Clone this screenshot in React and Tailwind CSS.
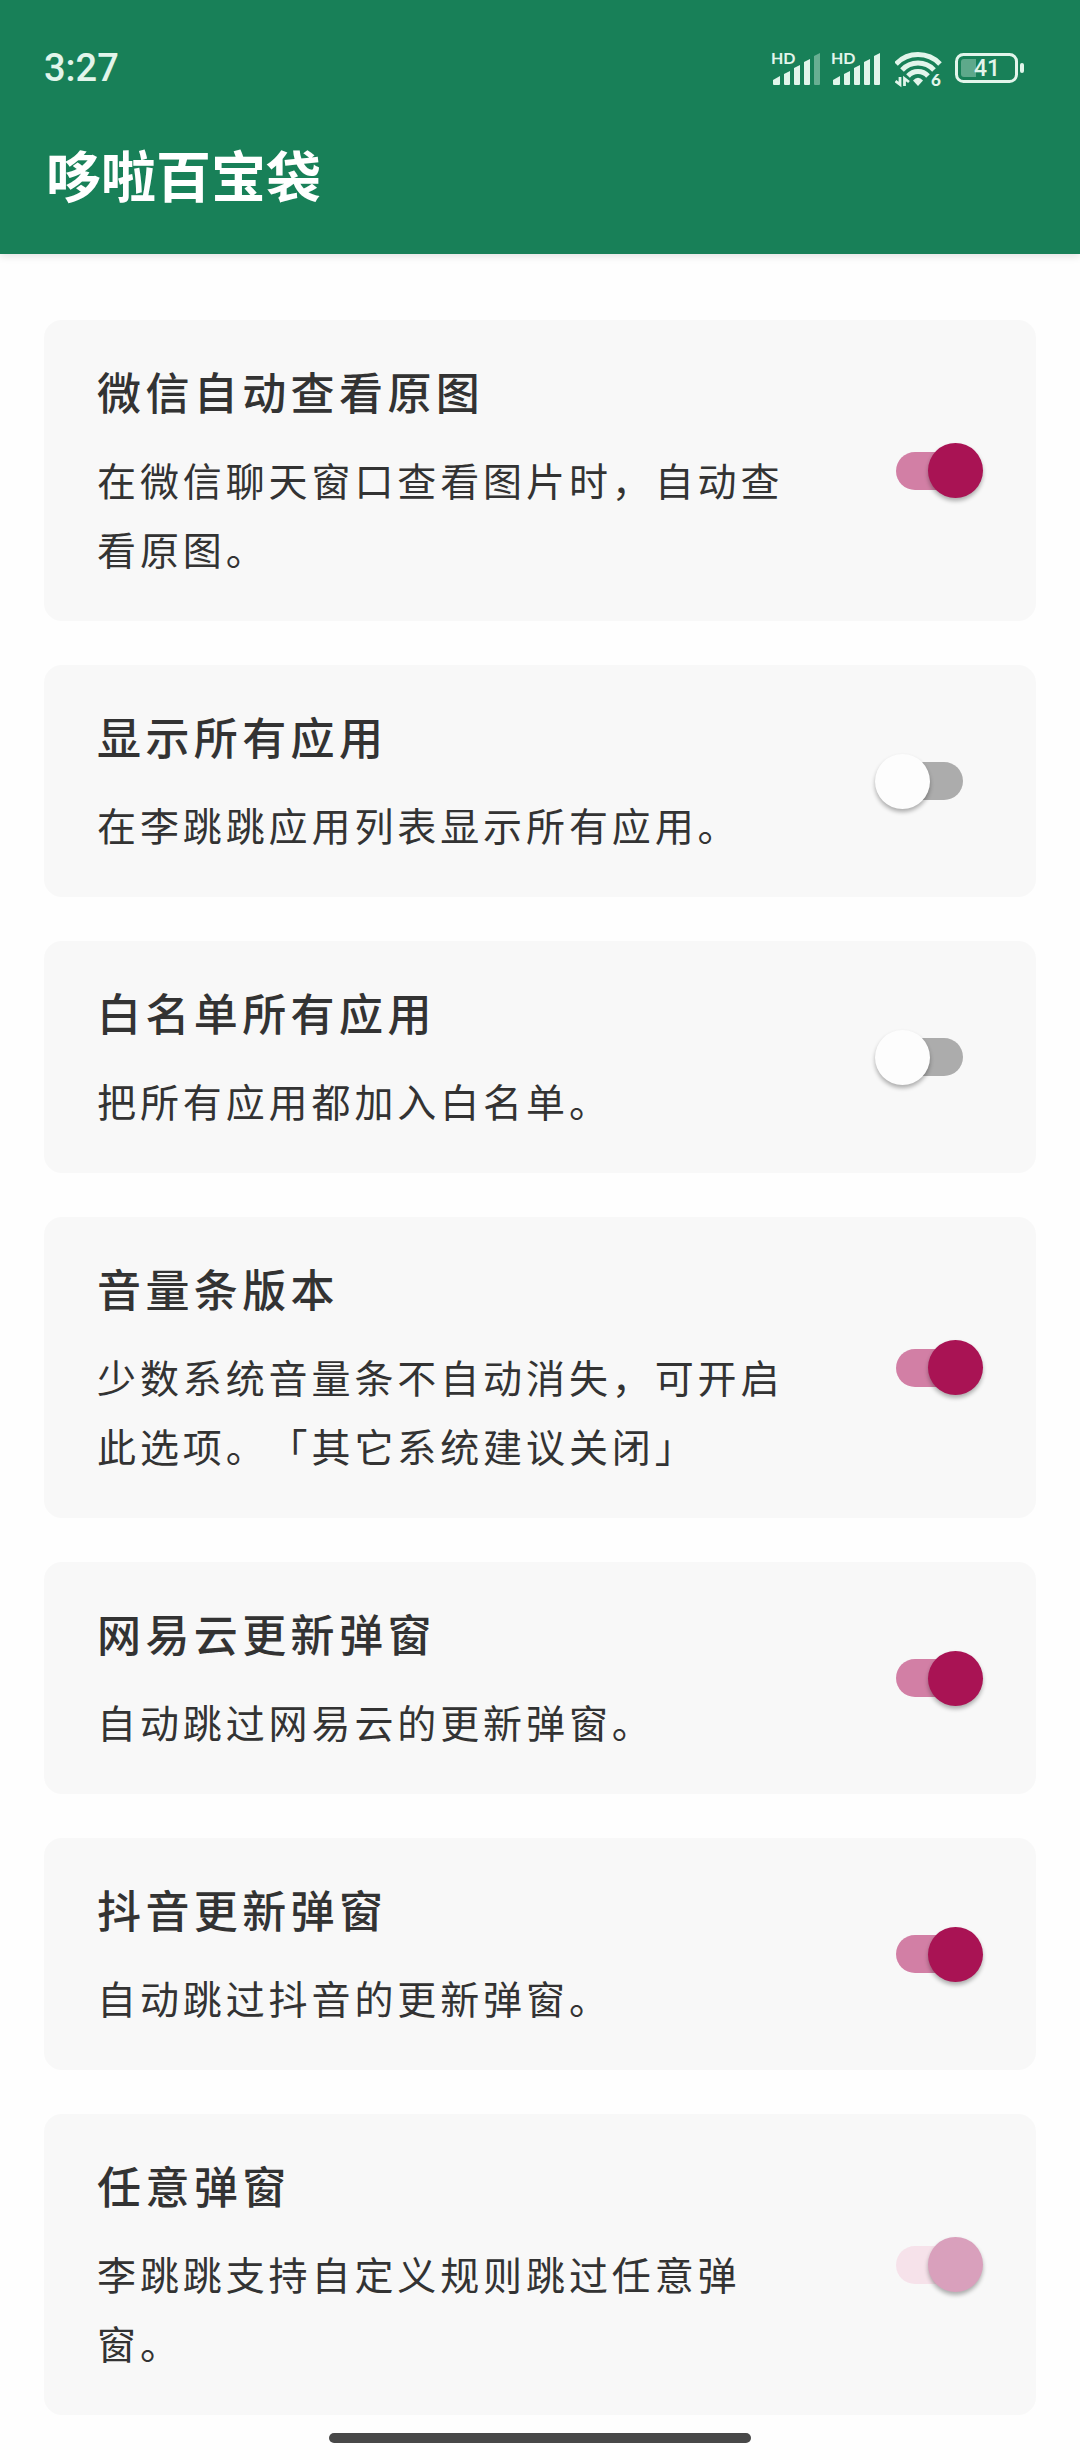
import React, { useState } from "react";

const settings = [
    {
        id: "wechat-original",
        title: "微信自动查看原图",
        desc: "在微信聊天窗口查看图片时，自动查看原图。",
        enabled: true,
    },
    {
        id: "show-all",
        title: "显示所有应用",
        desc: "在李跳跳应用列表显示所有应用。",
        enabled: false,
    },
    {
        id: "whitelist-all",
        title: "白名单所有应用",
        desc: "把所有应用都加入白名单。",
        enabled: false,
    },
    {
        id: "volume-bar",
        title: "音量条版本",
        desc: "少数系统音量条不自动消失，可开启此选项。「其它系统建议关闭」",
        enabled: true,
    },
    {
        id: "netease-update",
        title: "网易云更新弹窗",
        desc: "自动跳过网易云的更新弹窗。",
        enabled: true,
    },
    {
        id: "douyin-update",
        title: "抖音更新弹窗",
        desc: "自动跳过抖音的更新弹窗。",
        enabled: true,
    },
    {
        id: "any-popup",
        title: "任意弹窗",
        desc: "李跳跳支持自定义规则跳过任意弹窗。",
        enabled: true,
        locked: true,
    },
];

function SignalIcon({ weak }) {
    return (
        <svg width="52" height="48" viewBox="0 -6 52 48" fill="currentColor">
            <text x="0" y="14" className="font-['Lato',sans-serif] text-[16px] font-bold">
                HD
            </text>
            <path d="M2 34v-4l7-4v8q0 1-1 1H3q-1 0-1-1z" />
            <path d="M13 34V24l6-3v13q0 1-1 1h-4q-1 0-1-1z" />
            <path d="M23 34V18l6-3v19q0 1-1 1h-4q-1 0-1-1z" />
            <path d="M33 34V12l6-3v25q0 1-1 1h-4q-1 0-1-1z" />
            <path d="M43 34V6l6-3v31q0 1-1 1h-4q-1 0-1-1z" opacity={weak ? 0.4 : 1} />
        </svg>
    );
}

function WifiIcon() {
    return (
        <svg width="48" height="48" viewBox="1 -6 48 48" fill="none" stroke="currentColor">
            <path d="M2 14A30.500 30.500 0 0 1 46 14" strokeWidth="5" />
            <path d="M8 20A22 22 0 0 1 40 20" strokeWidth="5" />
            <path d="M14 26A13.500 13.500 0 0 1 34 26" strokeWidth="5" />
            <path d="M24 36l-5-5.500q5-5.500 10 0z" fill="currentColor" stroke="none" />
            <path d="M1.500 31l4.500 3.500V27M10.500 36V28.500l4.500 3.500" strokeWidth="2.800" />
            <text x="37" y="36" fill="currentColor" stroke="none" className="font-['Lato',sans-serif] text-[17px] font-black">
                6
            </text>
        </svg>
    );
}

function BatteryIcon() {
    return (
        <svg width="70" height="48" viewBox="0 -6 70 48" fill="currentColor">
            <rect x="1.500" y="4.500" width="60" height="27" rx="7" fill="none" stroke="currentColor" strokeWidth="3" />
            <path d="M9 9h12v18H9q-3 0-3-3V12q0-3 3-3z" opacity="0.35" />
            <rect x="65" y="13" width="4" height="10" rx="2" />
            <text x="32" y="26" textAnchor="middle" className="font-['Roboto',sans-serif] text-[23px] font-medium">
                41
            </text>
        </svg>
    );
}

function Switch({ id, checked, disabled, onChange }) {
    return (
        <span className="relative flex h-14 w-[108px] shrink-0 items-center justify-center">
            <input
                id={id}
                type="checkbox"
                role="switch"
                checked={checked}
                disabled={disabled}
                onChange={onChange}
                className="peer absolute inset-0 z-10 cursor-pointer opacity-0 disabled:cursor-default"
            />
            {/* Track */}
            <span className="h-[38px] w-[67px] rounded-full bg-[#acacac] peer-checked:bg-[#d27fa5] peer-disabled:bg-[#f6e2ea]" />
            {/* Thumb */}
            <span className="absolute left-0 size-[55px] rounded-full bg-[#fdfdfd] shadow-[0_3px_4px_rgba(0,0,0,0.3)] peer-checked:left-auto peer-checked:right-0 peer-checked:bg-[#a91354] peer-disabled:bg-[#d9a0bc]" />
        </span>
    );
}

function SettingCard({ item, checked, onToggle }) {
    return (
        <li>
            <label
                htmlFor={item.id}
                className="flex items-center gap-16 rounded-[18px] bg-[#f8f8f8] px-[53px]"
            >
                <span className="flex flex-1 flex-col gap-[25px] pt-[42px] pb-[38px] text-[#333333] [text-spacing-trim:space-all]">
                    <span className="text-[44px] leading-[58px] font-medium tracking-widest">{item.title}</span>
                    <span className="text-[39px] leading-[69px] tracking-widest">{item.desc}</span>
                </span>
                <Switch id={item.id} checked={checked} disabled={item.locked} onChange={onToggle} />
            </label>
        </li>
    );
}

function App() {
    const [values, setValues] = useState(() =>
        Object.fromEntries(settings.map((item) => [item.id, item.enabled]))
    );

    const toggle = (id) => setValues((prev) => ({ ...prev, [id]: !prev[id] }));

    return (
        <div lang="zh-CN" className="flex min-h-screen flex-col bg-[#fefefe] font-['Noto_Sans_CJK_SC',sans-serif]">
            <header className="bg-[#188058] shadow-[0_2px_8px_rgba(0,0,0,0.12)]">
                {/* Status bar */}
                <div className="flex h-[100px] items-center justify-between px-11 pt-9 text-[#e2f5eb]">
                    <span className="font-['Roboto',sans-serif] text-[38px] leading-10 font-medium">3:27</span>
                    <div className="flex items-center gap-3 pr-[11px]">
                        <div className="flex gap-2">
                            <SignalIcon weak />
                            <SignalIcon />
                        </div>
                        <WifiIcon />
                        <BatteryIcon />
                    </div>
                </div>
                <h1 className="px-[46px] pt-[33px] pb-[41px] text-[55px] leading-[80px] font-bold text-white">
                    哆啦百宝袋
                </h1>
            </header>

            <main className="px-11 pt-[66px]">
                <ul className="flex flex-col gap-11">
                    {settings.map((item) => (
                        <SettingCard
                            key={item.id}
                            item={item}
                            checked={values[item.id]}
                            onToggle={() => toggle(item.id)}
                        />
                    ))}
                </ul>
            </main>

            {/* Gesture bar */}
            <div className="mt-auto flex justify-center pt-4 pb-[17px]">
                <span className="h-[10px] w-[39%] rounded-full bg-[#484848]" />
            </div>
        </div>
    );
}

export default App;
